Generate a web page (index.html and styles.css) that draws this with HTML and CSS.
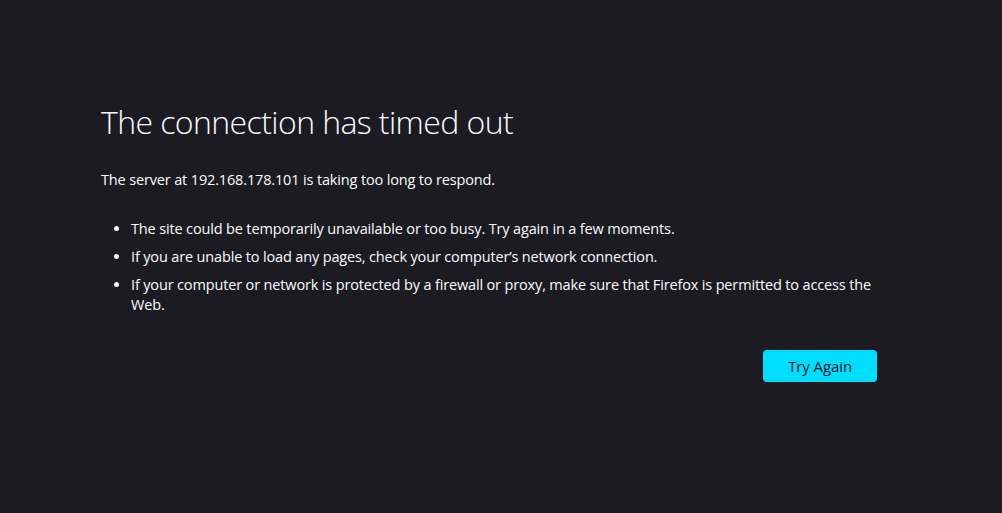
FILE: index.html
```html
<!DOCTYPE html>
<html lang="en">
<head>
<meta charset="utf-8">
<title>Problem loading page</title>
<link rel="stylesheet" href="styles.css">
</head>
<body>
<main class="container">
  <h1 class="title">The connection has timed out</h1>
  <p class="short-desc">The server at 192.168.178.101 is taking too long to respond.</p>
  <ul class="advice">
    <li>The site could be temporarily unavailable or too busy. Try again in a few moments.</li>
    <li>If you are unable to load any pages, check your computer’s network connection.</li>
    <li>If your computer or network is protected by a firewall or proxy, make sure that Firefox is permitted to access the Web.</li>
  </ul>
  <div class="actions">
    <button class="primary">Try Again</button>
  </div>
</main>
</body>
</html>
```
FILE: styles.css
```css
html, body {
  margin: 0;
  padding: 0;
  background: #1c1b22;
  color: #fbfbfe;
}

body {
  font-family: "Open Sans", "Noto Sans", sans-serif;
  font-size: 14.5px;
  letter-spacing: -0.15px;
  height: 513px;
  overflow: hidden;
}

.container {
  width: 776px;
  padding: 100px 0 0 101px;
}

.title {
  margin: 0;
  font-size: 32px;
  line-height: 44px;
  font-weight: 300;
  letter-spacing: -0.59px;
}

.short-desc {
  margin: 25px 0 0;
  line-height: 21px;
}

.advice {
  margin: 29px 0 0;
  padding-left: 30px;
  line-height: 20px;
}

.advice li {
  margin-bottom: 8px;
}

.advice li:last-child {
  margin-bottom: 0;
}

.actions {
  display: flex;
  justify-content: flex-end;
  margin-top: 35px;
}

.primary {
  height: 32px;
  padding: 0 25px;
  border: none;
  border-radius: 4px;
  background: #00ddff;
  color: #15141a;
  font-family: inherit;
  font-size: 15px;
  letter-spacing: -0.1px;
  cursor: pointer;
}
```
